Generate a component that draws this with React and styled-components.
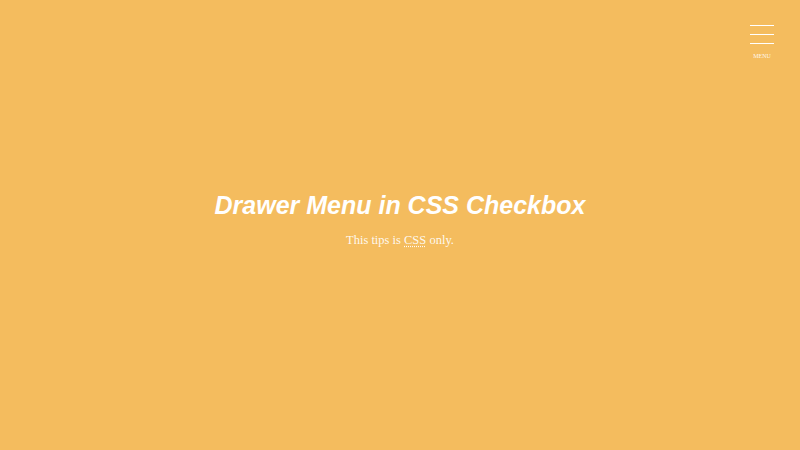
import React from "react";
import styled, { createGlobalStyle } from "styled-components";

const GlobalStyle = createGlobalStyle`
  html, body {
    margin: 0;
    padding: 0;
    height: 100%;
  }
  body {
    background: #f4bc5e;
    font-family: "Liberation Serif", "Times New Roman", serif;
    color: #fff;
  }
`;

const App = () => {
  return (
    <>
      <GlobalStyle />
      <Page>
        <MenuButton htmlFor="drawer">
          <Bar />
          <Bar />
          <Bar />
          <MenuLabel>MENU</MenuLabel>
        </MenuButton>
        <Hero>
          <Title>Drawer Menu in CSS Checkbox</Title>
          <Lead>
            This tips is <abbr title="Cascading Style Sheets">CSS</abbr> only.
          </Lead>
        </Hero>
      </Page>
    </>
  );
};

export default App;

const Page = styled.div`
  position: relative;
  height: 450px;
  display: flex;
  align-items: center;
  justify-content: center;
`;

const MenuButton = styled.label`
  position: absolute;
  top: 25px;
  right: 26px;
  width: 24px;
  display: flex;
  flex-direction: column;
  align-items: center;
  gap: 8px;
  cursor: pointer;
`;

const Bar = styled.span`
  display: block;
  width: 24px;
  height: 1px;
  background: #fff;
`;

const MenuLabel = styled.span`
  font-size: 6px;
  line-height: 7px;
  margin-top: 1px;
  color: rgba(255, 255, 255, 0.9);
`;

const Hero = styled.div`
  text-align: center;
  margin-top: -12px;
`;

const Title = styled.h1`
  margin: 0;
  font-family: "Liberation Sans", Arial, sans-serif;
  font-style: italic;
  font-weight: bold;
  font-size: 25px;
  line-height: 32px;
`;

const Lead = styled.p`
  margin: 10px 0 0;
  font-size: 12.5px;
  line-height: 18px;
  color: rgba(255, 255, 255, 0.92);

  abbr {
    text-decoration: underline dotted;
    text-underline-offset: 2px;
  }
`;
